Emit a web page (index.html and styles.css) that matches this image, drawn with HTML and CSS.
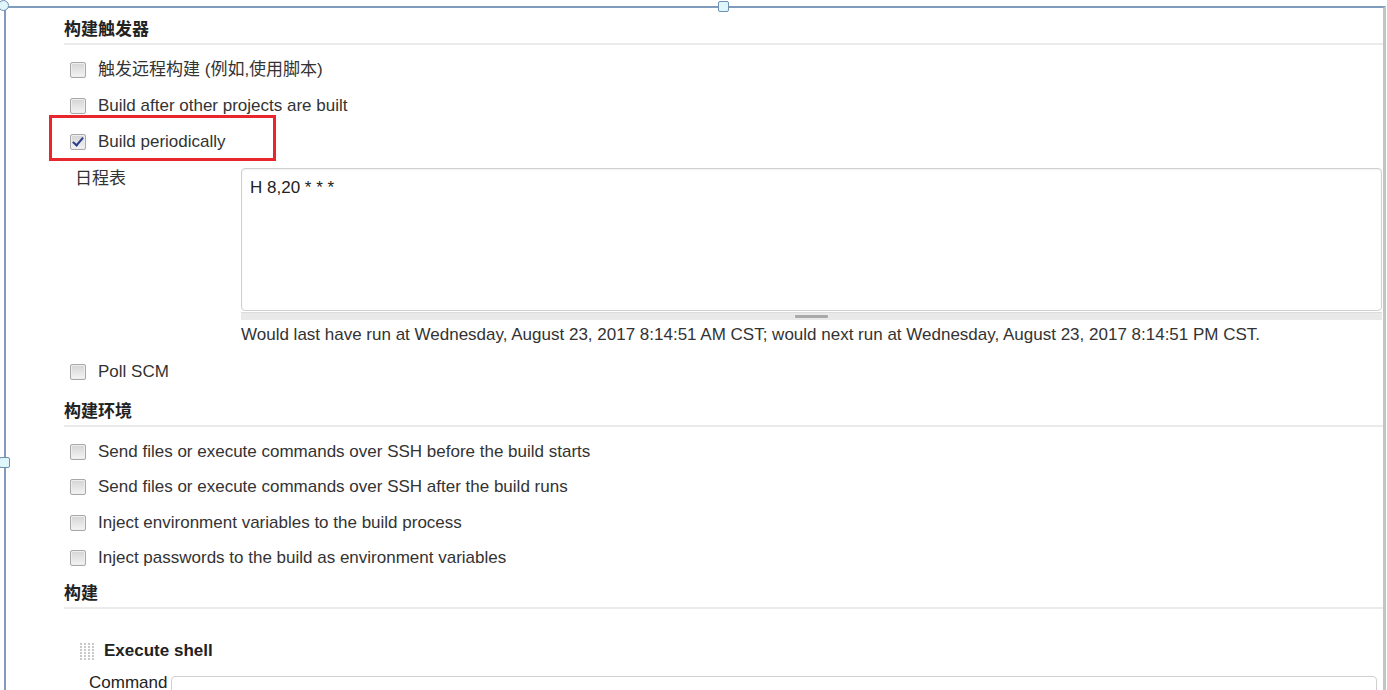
FILE: index.html
```html
<!DOCTYPE html>
<html lang="zh-CN">
<head>
  <meta charset="UTF-8" />
  <meta name="viewport" content="width=device-width, initial-scale=1.0" />
  <title>构建触发器</title>
  <link rel="stylesheet" href="styles.css">
</head>
<body>
  <div class="frame">
    <span class="handle corner"></span>
    <span class="handle top"></span>
    <span class="handle side"></span>

    <section class="section first">
      <h2 class="section-title">构建触发器</h2>
      <div class="rows">
        <div class="row"><span class="cb"></span><span class="label">触发远程构建 (例如,使用脚本)</span></div>
        <div class="row"><span class="cb"></span><span class="label">Build after other projects are built</span></div>
        <div class="row marked">
          <span class="cb checked"></span><span class="label">Build periodically</span>
          <span class="mark"></span>
        </div>
      </div>
      <div class="schedule">
        <div class="field-name">日程表</div>
        <div class="field">
          <div class="textarea">H 8,20 * * *<span class="grip-corner"></span></div>
          <div class="resize-bar"><span></span></div>
          <div class="help">Would last have run at Wednesday, August 23, 2017 8:14:51 AM CST; would next run at Wednesday, August 23, 2017 8:14:51 PM CST.</div>
        </div>
      </div>
      <div class="row poll"><span class="cb"></span><span class="label">Poll SCM</span></div>
    </section>

    <section class="section second">
      <h2 class="section-title">构建环境</h2>
      <div class="rows tight">
        <div class="row"><span class="cb"></span><span class="label">Send files or execute commands over SSH before the build starts</span></div>
        <div class="row"><span class="cb"></span><span class="label">Send files or execute commands over SSH after the build runs</span></div>
        <div class="row"><span class="cb"></span><span class="label">Inject environment variables to the build process</span></div>
        <div class="row"><span class="cb"></span><span class="label">Inject passwords to the build as environment variables</span></div>
      </div>
    </section>

    <section class="section third">
      <h2 class="section-title">构建</h2>
      <div class="step">
        <div class="step-head">
          <svg class="drag" width="14" height="17" viewBox="0 0 14 17">
            <g fill="#c9c9c9">
              <rect x="0" y="0" width="2" height="2"/><rect x="4" y="0" width="2" height="2"/><rect x="8" y="0" width="2" height="2"/><rect x="12" y="0" width="2" height="2"/>
              <rect x="0" y="3" width="2" height="2"/><rect x="4" y="3" width="2" height="2"/><rect x="8" y="3" width="2" height="2"/><rect x="12" y="3" width="2" height="2"/>
              <rect x="0" y="6" width="2" height="2"/><rect x="4" y="6" width="2" height="2"/><rect x="8" y="6" width="2" height="2"/><rect x="12" y="6" width="2" height="2"/>
              <rect x="0" y="9" width="2" height="2"/><rect x="4" y="9" width="2" height="2"/><rect x="8" y="9" width="2" height="2"/><rect x="12" y="9" width="2" height="2"/>
              <rect x="0" y="12" width="2" height="2"/><rect x="4" y="12" width="2" height="2"/><rect x="8" y="12" width="2" height="2"/><rect x="12" y="12" width="2" height="2"/>
              <rect x="0" y="15" width="2" height="2"/><rect x="4" y="15" width="2" height="2"/><rect x="8" y="15" width="2" height="2"/><rect x="12" y="15" width="2" height="2"/>
            </g>
          </svg>
          <span class="step-title">Execute shell</span>
        </div>
        <div class="command">
          <span class="command-name">Command</span>
          <div class="command-box">cd /d/jenkins/workspace/test-job &amp;&amp; sh ./build.sh</div>
        </div>
      </div>
    </section>
  </div>
</body>
</html>
```

FILE: styles.css
```css
html, body {
  margin: 0;
  height: 690px;
  overflow: hidden;
  background: #fff;
}
body {
  font-family: "Liberation Sans", "Noto Sans CJK SC", Arial, sans-serif;
  font-size: 17px;
  color: #333;
}
.frame {
  position: relative;
  margin: 6px 0 0 4px;
  width: 1382px;
  height: 700px;
  padding-top: 1px;
  border-top: 2px solid #7f9cbd;
  border-left: 2px solid #7f9cbd;
  border-right: 3px solid #c4c4c4;
  padding-left: 58px;
  box-sizing: border-box;
}
.handle {
  position: absolute;
  width: 9px;
  height: 9px;
  background: #dff6fb;
  border: 1px solid #6f8fb3;
}
.handle.corner {
  left: -8px;
  top: -8px;
  border-radius: 50%;
}
.handle.top {
  left: 712px;
  top: -7px;
  border-radius: 2px;
}
.handle.side {
  left: -7px;
  top: 449px;
  border-radius: 2px;
}
.section-title {
  margin: 0;
  padding-bottom: 3px;
  font-size: 17px;
  line-height: 20px;
  font-weight: bold;
  color: #222;
  border-bottom: 2px solid #ebebeb;
}
.first .section-title { padding-top: 11px; }
.second .section-title { padding-top: 12px; }
.third .section-title { padding-top: 8px; }
.rows {
  margin-top: 7px;
}
.row {
  position: relative;
  display: flex;
  align-items: center;
  height: 36px;
}
.tight .row {
  height: 35.5px;
}
.cb {
  width: 14px;
  height: 14px;
  margin-left: 6px;
  margin-right: 12px;
  border: 1px solid #a8a8a8;
  border-radius: 2px;
  background: linear-gradient(#d4d4d4, #f4f4f4);
  box-shadow: inset 0 0 0 1px #eee;
  position: relative;
}
.cb.checked::after {
  content: "";
  position: absolute;
  left: 4px;
  top: 0px;
  width: 4px;
  height: 9px;
  border-right: 2px solid #2a3f8f;
  border-bottom: 2px solid #2a3f8f;
  transform: rotate(40deg);
}
.label {
  line-height: 20px;
}
.mark {
  position: absolute;
  left: -15px;
  top: -9px;
  width: 227px;
  height: 46px;
  border: 3px solid #e8262c;
  box-sizing: border-box;
}
.schedule {
  display: grid;
  grid-template-columns: 177px 1fr;
  margin-top: 8px;
}
.field-name {
  padding: 1px 0 0 11px;
  line-height: 20px;
}
.field {
  margin-right: 1px;
}
.textarea {
  position: relative;
  height: 143px;
  padding: 9px 0 0 8px;
  line-height: 20px;
  border: 1px solid #cfcfcf;
  border-radius: 4px;
  box-sizing: border-box;
  box-shadow: inset 0 1px 2px rgba(0, 0, 0, 0.06);
  color: #222;
}
.grip-corner {
  position: absolute;
  right: 1px;
  bottom: 1px;
  width: 5px;
  height: 5px;
  background: radial-gradient(circle, #bbb 40%, transparent 45%) 0 0 / 2px 2px;
}
.resize-bar {
  display: flex;
  justify-content: center;
  align-items: center;
  height: 7px;
  margin-top: 1px;
  background: #e9e9e9;
  border-top: 1px solid #dcdcdc;
}
.resize-bar span {
  width: 33px;
  height: 3px;
  background: #a9a9a9;
  border-radius: 1px;
}
.help {
  margin-top: 5px;
  line-height: 20px;
}
.row.poll {
  margin-top: 9px;
}
.step {
  padding-top: 32px;
}
.step-head {
  display: flex;
  align-items: center;
  gap: 10px;
  padding-left: 16px;
  line-height: 20px;
}
.step-title {
  font-weight: bold;
  color: #222;
}
.command {
  display: flex;
  align-items: flex-start;
  margin-top: 12px;
  padding-left: 25px;
}
.command-name {
  width: 82px;
  line-height: 20px;
  color: #222;
}
.command-box {
  flex: 1;
  margin-top: 3px;
  margin-right: 6px;
  height: 60px;
  padding: 9px 0 0 12px;
  border: 1px solid #d0d0d0;
  border-radius: 4px;
  color: #888;
  font-size: 15px;
  line-height: 20px;
}
```
